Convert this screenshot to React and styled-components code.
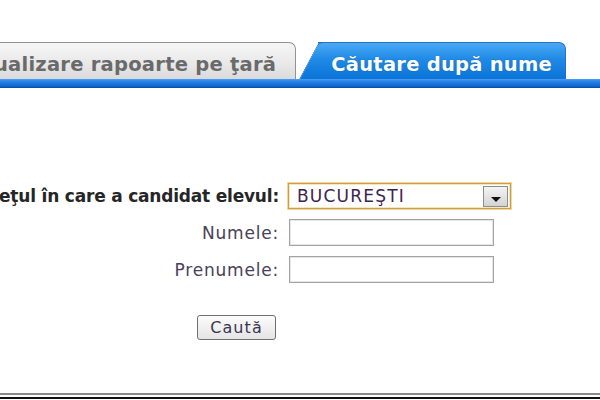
import React from "react";
import styled, { createGlobalStyle } from "styled-components";

const Global = createGlobalStyle`
  html, body { margin: 0; padding: 0; background: #fff; }
  body { overflow: hidden; font-family: "DejaVu Sans", Verdana, sans-serif; }
  #root { height: 400px; }
`;

const Page = styled.div`
  height: 400px;
  display: flex;
  flex-direction: column;
`;

const TabRow = styled.div`
  margin-top: 42px;
  height: 37px;
  display: flex;
  align-items: flex-end;
  justify-content: flex-end;
  padding-right: 34px;
`;

const Tab = styled.div`
  position: relative;
  flex-shrink: 0;
  box-sizing: border-box;
  white-space: nowrap;
  font-weight: bold;
  font-size: 19.5px;
  letter-spacing: 0.25px;
  line-height: 22px;
  border-top-right-radius: 7px;
  ${(p) =>
    p.$active
      ? `
    height: 37px;
    margin-left: 22px;
    padding: 11px 13px 0 13px;
    color: #fff;
    text-shadow: 0 0 1px rgba(0,40,120,0.5);
    background: linear-gradient(#4aa9f3 0%, #1f8ae6 45%, #0a74d8 100%);
    border: 1px solid #2a6ecb;
    border-left: none;
    border-bottom: none;
    z-index: 1;
    &::before {
      content: "";
      position: absolute;
      left: -19px;
      top: -1px;
      bottom: 0;
      width: 34px;
      background: linear-gradient(#4aa9f3 0%, #1f8ae6 45%, #0a74d8 100%);
      border-left: 1px solid #2a6ecb;
      border-top: 1px solid #2a6ecb;
      border-top-left-radius: 5px;
      transform: skewX(-28deg);
      transform-origin: bottom left;
      z-index: -1;
    }
  `
      : `
    height: 37px;
    padding: 11px 19px 0 10px;
    color: #6a6a6a;
    background: linear-gradient(#f6f6f6 0%, #e8e8e8 60%, #dadada 100%);
    border: 1px solid #929292;
    border-bottom: none;
  `}
`;

const Bar = styled.div`
  height: 9px;
  box-sizing: border-box;
  background: linear-gradient(#4d9cf0 0%, #2a84e6 30%, #1a72da 65%, #0d5cc2 100%);
  border-bottom: 1px solid #0b4fae;
  position: relative;
  z-index: 2;
`;

const Form = styled.div`
  margin-top: 95px;
  display: grid;
  grid-template-columns: 279px 223px;
  column-gap: 10px;
  row-gap: 10px;
  align-items: center;
`;

const LabelCell = styled.div`
  display: flex;
  justify-content: flex-end;
  min-width: 0;
`;

const Label = styled.span`
  flex-shrink: 0;
  white-space: nowrap;
  font-size: 17px;
  font-weight: ${(p) => (p.$bold ? "bold" : "normal")};
  letter-spacing: ${(p) => (p.$bold ? "-0.2px" : "0.8px")};
  color: ${(p) => (p.$bold ? "#262626" : "#4a4058")};
`;

const SelectBox = styled.div`
  box-sizing: border-box;
  width: 223px;
  height: 26px;
  display: flex;
  align-items: center;
  border: 1px solid #c99f4c;
  box-shadow: 0 0 0 1px #f1d79c, inset 0 0 0 1px #f6e6c0;
  background: #fff;
  padding-left: 8px;
  margin-left: -1px;
`;

const SelectText = styled.span`
  font-size: 17px;
  letter-spacing: 1.2px;
  color: #3c2450;
`;

const DropButton = styled.div`
  margin-left: auto;
  margin-right: 2px;
  box-sizing: border-box;
  width: 25px;
  height: 21px;
  border: 1px solid #8d8d8d;
  background: linear-gradient(#f4f4f4, #d3d3d3);
  display: flex;
  align-items: flex-end;
  justify-content: center;
  padding-bottom: 4px;
  &::after {
    content: "";
    width: 0;
    height: 0;
    border-left: 5px solid transparent;
    border-right: 5px solid transparent;
    border-top: 5px solid #111;
  }
`;

const TextInput = styled.input`
  box-sizing: border-box;
  width: 205px;
  height: 27px;
  border: 1px solid #a3a3a3;
  box-shadow: inset 0 0 0 1px #e6e6e6;
  background: #fff;
  font-family: inherit;
  font-size: 16px;
  padding: 0 4px;
  outline: none;
`;

const ButtonRow = styled.div`
  margin-top: 32px;
  padding-left: 197px;
`;

const Button = styled.button`
  box-sizing: border-box;
  width: 79px;
  height: 25px;
  border: 1px solid #6f6f6f;
  border-radius: 3px;
  background: linear-gradient(#fcfcfc, #e4e4e4);
  font-family: inherit;
  font-size: 16px;
  letter-spacing: 1.1px;
  color: #3a3550;
  padding: 0;
  cursor: pointer;
`;

const Footer = styled.div`
  margin-top: auto;
  margin-bottom: 1px;
  height: 2px;
  border-top: 2px solid #8a8a8a;
  border-bottom: 2px solid #111;
`;

export default function App() {
  return (
    <Page>
      <Global />
      <TabRow>
        <Tab>Vizualizare rapoarte pe ţară</Tab>
        <Tab $active>Căutare după nume</Tab>
      </TabRow>
      <Bar />
      <Form>
        <LabelCell>
          <Label $bold>Judeţul în care a candidat elevul:</Label>
        </LabelCell>
        <SelectBox>
          <SelectText>BUCUREŞTI</SelectText>
          <DropButton />
        </SelectBox>
        <LabelCell>
          <Label>Numele:</Label>
        </LabelCell>
        <TextInput type="text" />
        <LabelCell>
          <Label>Prenumele:</Label>
        </LabelCell>
        <TextInput type="text" />
      </Form>
      <ButtonRow>
        <Button>Caută</Button>
      </ButtonRow>
      <Footer />
    </Page>
  );
}
